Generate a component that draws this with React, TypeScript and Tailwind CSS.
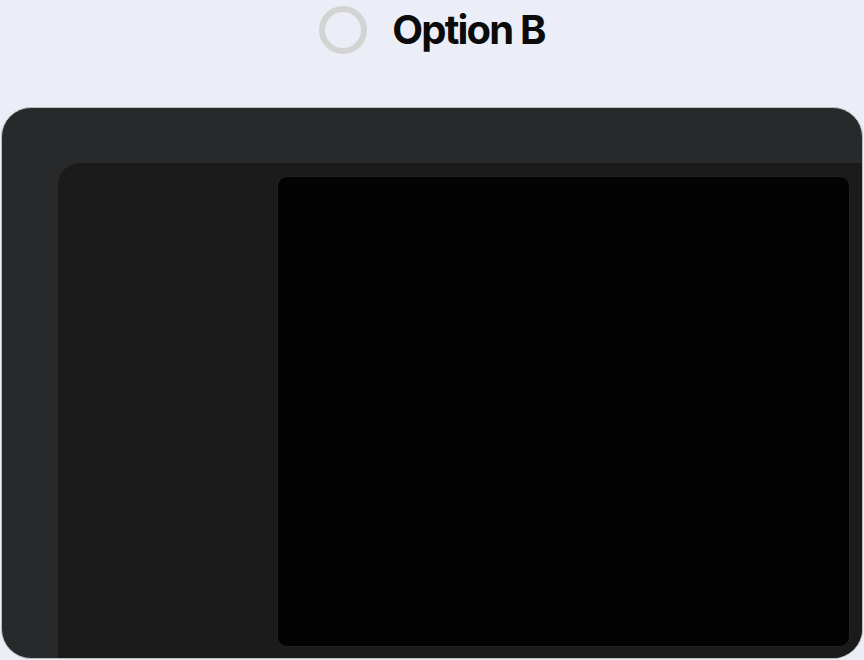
import React from 'react';

const App: React.FC = () => {
    return (
        <div className="w-[864px] h-[660px] bg-[#ebeef7] flex flex-col overflow-hidden" style={{ fontFamily: 'Inter, "Liberation Sans", sans-serif' }}>
            <div className="h-[107px] flex items-start justify-center pt-[6px] gap-[25px]">
                <div className="w-[48px] h-[48px] rounded-full border-[6px] border-[#d3d3d3] shrink-0" />
                <span className="text-[40px] leading-[48px] font-bold tracking-[-0.045em] text-[#0b0b0c]">Option B</span>
            </div>

            <div className="flex-1 mx-px mb-[1px] rounded-[30px] bg-[#28292b] border border-[#bcbdc1] overflow-hidden flex flex-col">
                <div className="h-[55px] shrink-0" />
                <div className="flex-1 ml-[56px] rounded-tl-[22px] bg-[#1b1b1b] flex">
                    <div className="w-[219px] shrink-0" />
                    <div className="flex-1 mt-[13px] mr-[12px] mb-[11px] rounded-[10px] bg-[#030304] border border-[#232325]" />
                </div>
            </div>
        </div>
    );
};

export default App;
